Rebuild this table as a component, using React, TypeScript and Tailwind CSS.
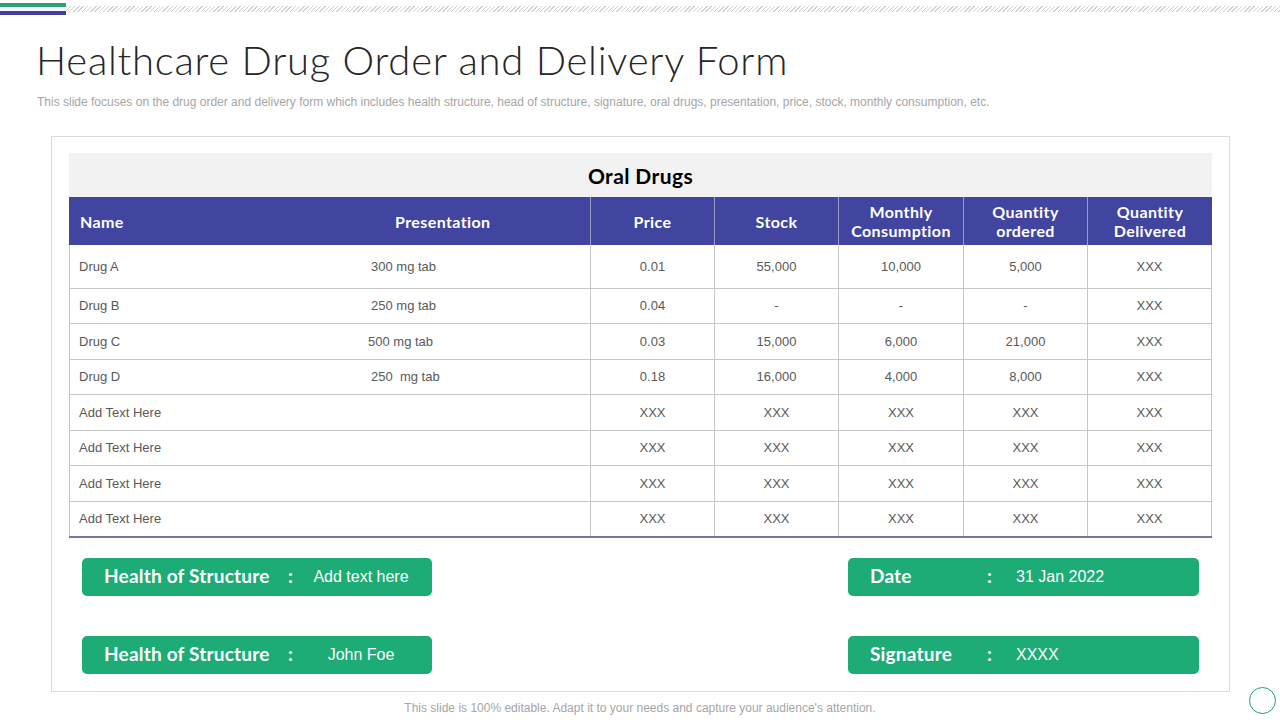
import React from "react";

const rows: string[][] = [
  ["Drug A", "300 mg tab", "0.01", "55,000", "10,000", "5,000", "XXX"],
  ["Drug B", "250 mg tab", "0.04", "-", "-", "-", "XXX"],
  ["Drug C", "500 mg tab", "0.03", "15,000", "6,000", "21,000", "XXX"],
  ["Drug D", "250  mg tab", "0.18", "16,000", "4,000", "8,000", "XXX"],
  ["Add Text Here", "", "XXX", "XXX", "XXX", "XXX", "XXX"],
  ["Add Text Here", "", "XXX", "XXX", "XXX", "XXX", "XXX"],
  ["Add Text Here", "", "XXX", "XXX", "XXX", "XXX", "XXX"],
  ["Add Text Here", "", "XXX", "XXX", "XXX", "XXX", "XXX"],
];
const rowH = [43, 35, 36, 35, 36, 35, 36, 35];
const presOffset = [301, 301, 298, 301, 301, 301, 301, 301];
const colW = ["w-[124px]", "w-[124px]", "w-[125px]", "w-[124px]", "w-[125px]"];

function Pill({
  label,
  value,
  colon,
  valueClass,
  width,
}: {
  label: string;
  value: string;
  colon: string;
  valueClass: string;
  width: string;
}) {
  return (
    <div className={`flex h-[38px] ${width} items-center rounded-[5px] bg-[#1dab76] text-white`}>
      <div className={`${colon} pb-[3px] pl-[22px] font-['Lato'] text-[19px] font-bold leading-none tracking-[0.2px]`}>{label}</div>
      <div className="w-[24px] pb-[3px] font-['Lato'] text-[19px] font-bold leading-none">:</div>
      <div className={`${valueClass} font-['Liberation_Sans'] text-[16px] leading-none`}>{value}</div>
    </div>
  );
}

export default function App() {
  return (
    <div className="relative h-[720px] w-[1280px] overflow-hidden bg-white font-['Liberation_Sans']">
      {/* top decoration */}
      <div className="flex h-[18px] items-start">
        <div className="w-[66px] pt-[3px]">
          <div className="h-[4px] bg-[#27a57a]" />
          <div className="mt-[4px] h-[4px] bg-[#3f3f9d]" />
        </div>
        <div className="mt-[6px] h-[6px] flex-1 bg-[repeating-linear-gradient(135deg,#d2d2d2_0px,#d2d2d2_1px,transparent_1px,transparent_3px)]" />
      </div>

      {/* title */}
      <div className="pl-[36px] pt-[20px] font-['Lato'] text-[40px] font-light leading-[44px] tracking-[0.75px] text-[#262626]">
        Healthcare Drug Order and Delivery Form
      </div>
      <div className="mt-[13px] pl-[37px] text-[12px] leading-[14px] tracking-[0px] text-[#a5a5a5]">
        This slide focuses on the drug order and delivery form which includes health structure, head of structure, signature, oral drugs, presentation, price, stock, monthly consumption, etc.
      </div>

      {/* main box */}
      <div className="ml-[51px] mt-[27px] h-[556px] w-[1179px] border border-[#dadada] px-[17px] pt-[16px]">
        <div className="w-[1143px]">
          <div className="flex h-[44px] items-center justify-center bg-[#f2f2f2] pt-[1px] font-['Lato'] text-[21px] font-bold tracking-[0.4px] text-black">
            Oral Drugs
          </div>
          {/* header */}
          <div className="flex h-[48px] bg-[#4145a0] font-['Lato'] text-[16px] font-bold leading-[19px] tracking-[0.4px] text-white">
            <div className="flex w-[521px] items-center">
              <div className="w-[301px] pl-[11px]">Name</div>
              <div className="pl-[25px]">Presentation</div>
            </div>
            {["Price", "Stock", "Monthly\nConsumption", "Quantity\nordered", "Quantity\nDelivered"].map((h, i) => (
              <div
                key={i}
                className={`flex ${colW[i]} items-center justify-center whitespace-pre-line border-l border-[#9a9cc8] text-center`}
              >
                {h}
              </div>
            ))}
          </div>
          {/* body */}
          <div className="border-b-2 border-b-[#77779f]">
            {rows.map((r, ri) => (
              <div
                key={ri}
                style={{ height: rowH[ri] }}
                className={`flex text-[13px] text-[#595959] ${ri > 0 ? "border-t border-[#c6c6c6]" : ""}`}
              >
                <div className="flex w-[521px] items-center border-l border-[#c6c6c6]">
                  <div style={{ width: presOffset[ri] }} className="pl-[9px]">
                    {r[0]}
                  </div>
                  <div className="whitespace-pre">{r[1]}</div>
                </div>
                {r.slice(2).map((c, ci) => (
                  <div
                    key={ci}
                    className={`flex ${colW[ci]} items-center justify-center border-l border-[#c6c6c6] ${ci === 4 ? "border-r" : ""}`}
                  >
                    {c}
                  </div>
                ))}
              </div>
            ))}
          </div>
        </div>

        {/* pills */}
        <div className="mt-[20px] flex justify-between pl-[13px] pr-[13px]">
          <div className="flex flex-col gap-[40px]">
            <Pill width="w-[350px]" label="Health of Structure" value="Add text here" colon="w-[206px]" valueClass="w-[98px] text-center" />
            <Pill width="w-[350px]" label="Health of Structure" value="John Foe" colon="w-[206px]" valueClass="w-[98px] text-center" />
          </div>
          <div className="flex flex-col gap-[40px]">
            <Pill width="w-[351px]" label="Date" value="31 Jan 2022" colon="w-[139px]" valueClass="pl-[5px]" />
            <Pill width="w-[351px]" label="Signature" value="XXXX" colon="w-[139px]" valueClass="pl-[5px]" />
          </div>
        </div>
      </div>

      {/* footer */}
      <div className="mt-[9px] text-center text-[12px] leading-[14px] text-[#a6a6a6]">
        This slide is 100% editable. Adapt it to your needs and capture your audience&apos;s attention.
      </div>

      <div className="absolute left-[1249px] top-[687px] h-[27px] w-[27px] rounded-full border border-[#1f9e78]" />
    </div>
  );
}
